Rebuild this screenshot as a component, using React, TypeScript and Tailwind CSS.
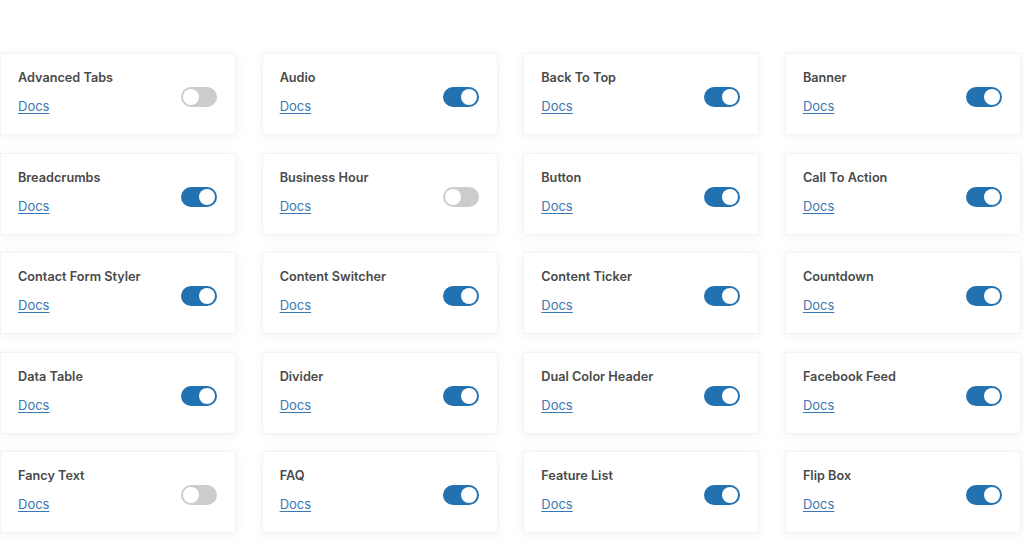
import { useState } from 'react';

type Widget = { name: string; on: boolean };

const widgets: Widget[] = [
  { name: 'Advanced Tabs', on: false },
  { name: 'Audio', on: true },
  { name: 'Back To Top', on: true },
  { name: 'Banner', on: true },
  { name: 'Breadcrumbs', on: true },
  { name: 'Business Hour', on: false },
  { name: 'Button', on: true },
  { name: 'Call To Action', on: true },
  { name: 'Contact Form Styler', on: true },
  { name: 'Content Switcher', on: true },
  { name: 'Content Ticker', on: true },
  { name: 'Countdown', on: true },
  { name: 'Data Table', on: true },
  { name: 'Divider', on: true },
  { name: 'Dual Color Header', on: true },
  { name: 'Facebook Feed', on: true },
  { name: 'Fancy Text', on: false },
  { name: 'FAQ', on: true },
  { name: 'Feature List', on: true },
  { name: 'Flip Box', on: true },
];

function Toggle({ checked, onChange }: { checked: boolean; onChange: () => void }) {
  return (
    <button
      onClick={onChange}
      className={
        'relative mt-[10px] h-5 w-9 shrink-0 rounded-full transition-colors ' +
        (checked ? 'bg-[#2271b1]' : 'bg-[#cccccc]')
      }
    >
      <span
        className={
          'absolute top-[2px] h-4 w-4 rounded-full bg-white transition-all ' +
          (checked ? 'left-[18px]' : 'left-[2px]')
        }
      />
    </button>
  );
}

export default function App() {
  const [items, setItems] = useState(widgets);

  const toggle = (i: number) => {
    setItems(items.map((w, idx) => (idx === i ? { ...w, on: !w.on } : w)));
  };

  return (
    <div
      className="min-h-screen bg-white pt-[53px]"
      style={{ fontFamily: 'Inter, "Liberation Sans", sans-serif' }}
    >
      <div className="grid w-[1021px] grid-cols-4 gap-x-[25.5px] gap-y-[17.5px]">
        {items.map((w, i) => (
          <div
            key={w.name}
            className="flex h-[82px] items-center justify-between border border-[#f3f3f3] bg-white pr-[18px] pb-1 pl-[17px] shadow-[0_2px_12px_rgba(0,0,0,0.05)]"
          >
            <div className="flex flex-col gap-2">
              <span className="text-[12.7px] leading-5 font-semibold text-[#4a4a4a]">{w.name}</span>
              <a href="#" className="text-[13px] leading-5 text-[#3a78b5] underline underline-offset-2">
                Docs
              </a>
            </div>
            <Toggle checked={w.on} onChange={() => toggle(i)} />
          </div>
        ))}
      </div>
    </div>
  );
}
